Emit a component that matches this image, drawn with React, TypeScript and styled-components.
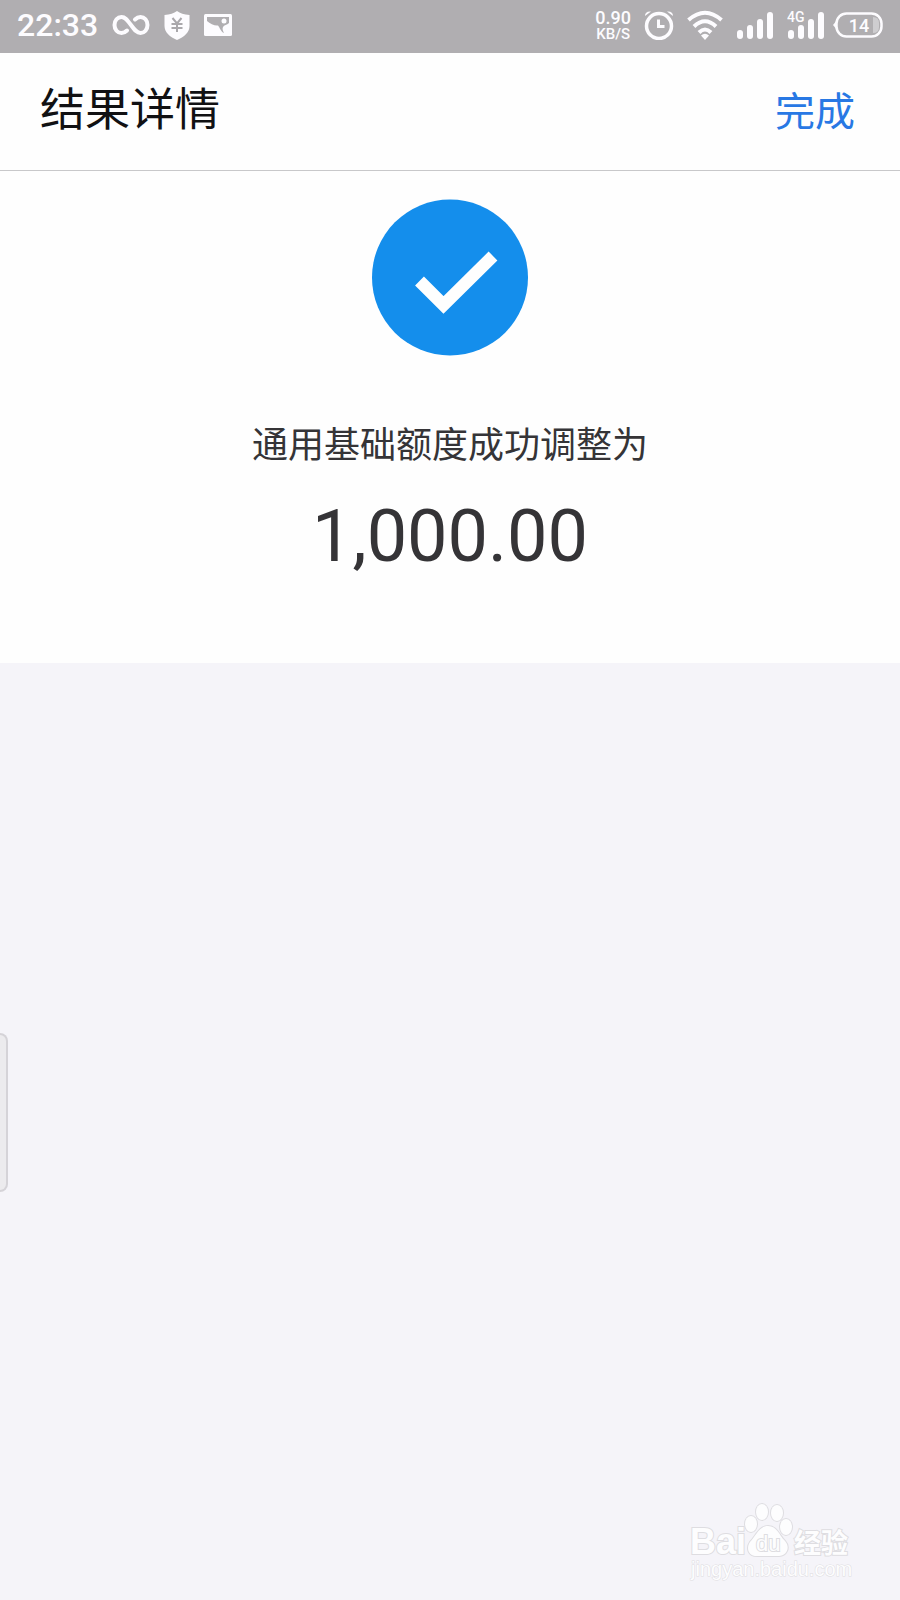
import React from "react";
import styled, { createGlobalStyle } from "styled-components";

const GlobalStyle = createGlobalStyle`
  *, *::before, *::after { box-sizing: border-box; }
  body {
    margin: 0;
    background: #f5f4f9;
    font-family: Roboto, "Noto Sans CJK SC", sans-serif;
  }
`;

const Page = styled.div`
  display: flex;
  flex-direction: column;
  min-height: 100vh;
`;

const StatusBar = styled.div`
  display: flex;
  align-items: center;
  justify-content: space-between;
  height: 53px;
  padding: 0 16px 3px 17px;
  background: #b0aeb1;
  color: #fdfcff;
`;

const StatusGroup = styled.div<{ $gap: number }>`
  display: flex;
  align-items: center;
  gap: ${(p) => p.$gap}px;

  svg { display: block; }
`;

const Clock = styled.time`
  font-size: 32px;
  line-height: 36px;
  font-weight: 500;
`;

const Speed = styled.div`
  display: flex;
  flex-direction: column;
  align-items: center;
  font-weight: 500;
`;

const SpeedValue = styled.span`
  font-size: 18px;
  line-height: 18px;
`;

const SpeedUnit = styled.span`
  font-size: 15px;
  line-height: 15px;
`;

const Header = styled.header`
  display: flex;
  align-items: center;
  justify-content: space-between;
  height: 118px;
  padding: 0 45px 2px 40px;
  background: #fefefe;
  border-bottom: 1px solid #c8c8ca;
`;

const Title = styled.h1`
  margin: 0;
  font-size: 45px;
  line-height: 60px;
  font-weight: 400;
  color: #111113;
`;

const DoneButton = styled.button`
  margin: 0;
  padding: 4px 0 0;
  border: 0;
  background: none;
  font: inherit;
  font-size: 40px;
  line-height: 56px;
  color: #2878e4;
  cursor: pointer;
`;

const Result = styled.section`
  display: flex;
  flex-direction: column;
  align-items: center;
  padding: 28px 20px 84px;
  background: #fefefe;
`;

const Message = styled.p`
  margin: 62px 0 0;
  font-size: 36px;
  line-height: 56px;
  color: #353437;
`;

const Amount = styled.strong`
  margin-top: 21px;
  font-size: 72px;
  line-height: 84px;
  font-weight: 400;
  color: #353437;
`;

const Rest = styled.main`
  position: relative;
  flex: 1;
  display: flex;
  align-items: flex-end;
  justify-content: flex-end;
  min-height: 640px;
  padding: 0 40px 14px;
`;

const EdgeHandle = styled.div`
  position: absolute;
  left: 0;
  top: 370px;
  width: 8px;
  height: 159px;
  background: #ecebee;
  border: 2px solid #d5d3d8;
  border-left: 0;
  border-radius: 0 8px 8px 0;
`;

const InfinityIcon = () => (
  <svg width="38" height="22" viewBox="0 0 38 22" fill="none" stroke="currentColor" strokeWidth="4" strokeLinecap="round">
    <path d="M15 16.5C13 18.5 11.5 19 9.5 19C5.5 19 2.5 15.5 2.5 11S5.500 3 9.500 3C13 3 15 5.500 19 11S25 19 28.500 19C32.500 19 35.500 15.500 35.500 11S32.500 3 28.500 3C26 3 24.500 4 23 5.500" />
  </svg>
);

const ShieldIcon = () => (
  <svg width="26" height="29" viewBox="0 0 26 29">
    <path fill="currentColor" d="M13 0C16 2.500 20 3.500 25.500 4V15C25.500 21.500 20 26 13 29C6 26 0.500 21.500 0.500 15V4C6 3.500 10 2.500 13 0Z" />
    <path d="M8.500 7L13 12.500L17.500 7M13 12.500V21M7.500 13H18.500M7.500 17H18.500" fill="none" stroke="#aaa8ac" strokeWidth="2" />
  </svg>
);

const PictureIcon = () => (
  <svg width="28" height="22" viewBox="0 0 28 22">
    <rect width="28" height="22" rx="1.500" fill="currentColor" />
    <path fill="#b0aeb1" d="M3 3H25V9C23 11 20 11 19 13C18 15 19 17 20 19C17 18 16 14 14 11.500C11 12 6 10 3 7Z" />
    <circle cx="20" cy="7" r="2.500" fill="currentColor" />
  </svg>
);

const AlarmIcon = () => (
  <svg width="30" height="30" viewBox="0 0 30 30" fill="none" stroke="currentColor">
    <circle cx="15" cy="16" r="12.500" strokeWidth="3.500" />
    <path d="M14.500 9.500V16.500H20.500" strokeWidth="3" />
    <path fill="currentColor" stroke="none" d="M1 6Q1 1 7 1.500ZM23 1.500Q29 1 29 6Z" />
  </svg>
);

const WifiIcon = () => (
  <svg width="36" height="30" viewBox="0 0 36 30" fill="none" stroke="currentColor" strokeWidth="4">
    <path d="M1.500 10Q18 -4.500 34.500 10M7 16.500Q18 6 29 16.500M12 22.500Q18 16.500 24 22.500" />
    <path d="M14 25.500Q18 22 22 25.500L18 30Z" fill="currentColor" stroke="none" />
  </svg>
);

const SignalIcon = ({ label }: { label?: string }) => (
  <svg width="38" height="30" viewBox="0 0 38 30" fill="currentColor">
    <rect x="1" y="20" width="6" height="9" rx="3" />
    <rect x="11" y="15" width="6" height="14" rx="3" />
    <rect x="21" y="9" width="6" height="20" rx="3" />
    <rect x="31" y="2" width="6" height="27" rx="3" />
    {label && <text x="0" y="12" fontSize="14" fontWeight="500">{label}</text>}
  </svg>
);

const BatteryIcon = ({ level }: { level: number }) => (
  <svg width="51" height="26" viewBox="0 0 51 26">
    <rect x="3.500" y="1.500" width="45" height="23" rx="10" fill="none" stroke="currentColor" strokeWidth="2.500" />
    <path d="M4 8L0 13L4 18Z" fill="currentColor" />
    <path d="M40 5Q46 5 46 11V15Q46 21 40 21Z" fill="currentColor" opacity="0.400" />
    <text x="26" y="20" fontSize="18" fontWeight="500" textAnchor="middle" fill="currentColor">{level}</text>
  </svg>
);

const SuccessIcon = () => (
  <svg width="157" height="157" viewBox="0 0 157 157" role="img" aria-label="成功">
    <circle cx="78" cy="78.500" r="78" fill="#148eec" />
    <path d="M47.500 82L71.500 106L121 57" fill="none" stroke="#fefefe" strokeWidth="12.500" />
  </svg>
);

const Watermark = () => (
  <svg
    width="174"
    height="84"
    viewBox="0 0 174 84"
    fill="#fdfdfe"
    stroke="#dedde1"
    strokeWidth="2"
    paintOrder="stroke"
    fontFamily='"Liberation Sans", "Noto Sans CJK SC", sans-serif'
    fontWeight="700"
  >
    <text x="4" y="52" fontSize="36">Bai</text>
    <ellipse cx="65" cy="22" rx="6" ry="8" />
    <ellipse cx="76" cy="10" rx="6" ry="8" />
    <ellipse cx="91" cy="11" rx="6" ry="8" />
    <ellipse cx="100" cy="25" rx="6" ry="8" />
    <path d="M82 24C91 24 93 33 99 39C105 46 100 54 93 54C86 54 79 54 71 54C62 54 60 46 64 40C70 34 73 24 82 24Z" />
    <text x="70" y="49" fontSize="22" fontWeight="400">du</text>
    <text x="108" y="51" fontSize="27">经验</text>
    <text x="5" y="74" fontSize="20" fontWeight="400" strokeWidth="1">jingyan.baidu.com</text>
  </svg>
);

export default function App() {
  return (
    <Page>
      <GlobalStyle />
      <StatusBar>
        <StatusGroup $gap={14}>
          <Clock>22:33</Clock>
          <InfinityIcon />
          <ShieldIcon />
          <PictureIcon />
        </StatusGroup>
        <StatusGroup $gap={8}>
          <StatusGroup $gap={13}>
            <Speed>
              <SpeedValue>0.90</SpeedValue>
              <SpeedUnit>KB/S</SpeedUnit>
            </Speed>
            <AlarmIcon />
            <WifiIcon />
            <SignalIcon />
            <SignalIcon label="4G" />
          </StatusGroup>
          <BatteryIcon level={14} />
        </StatusGroup>
      </StatusBar>
      <Header>
        <Title>结果详情</Title>
        <DoneButton type="button">完成</DoneButton>
      </Header>
      <Result>
        <SuccessIcon />
        <Message>通用基础额度成功调整为</Message>
        <Amount>1,000.00</Amount>
      </Result>
      <Rest>
        <EdgeHandle />
        <Watermark />
      </Rest>
    </Page>
  );
}
